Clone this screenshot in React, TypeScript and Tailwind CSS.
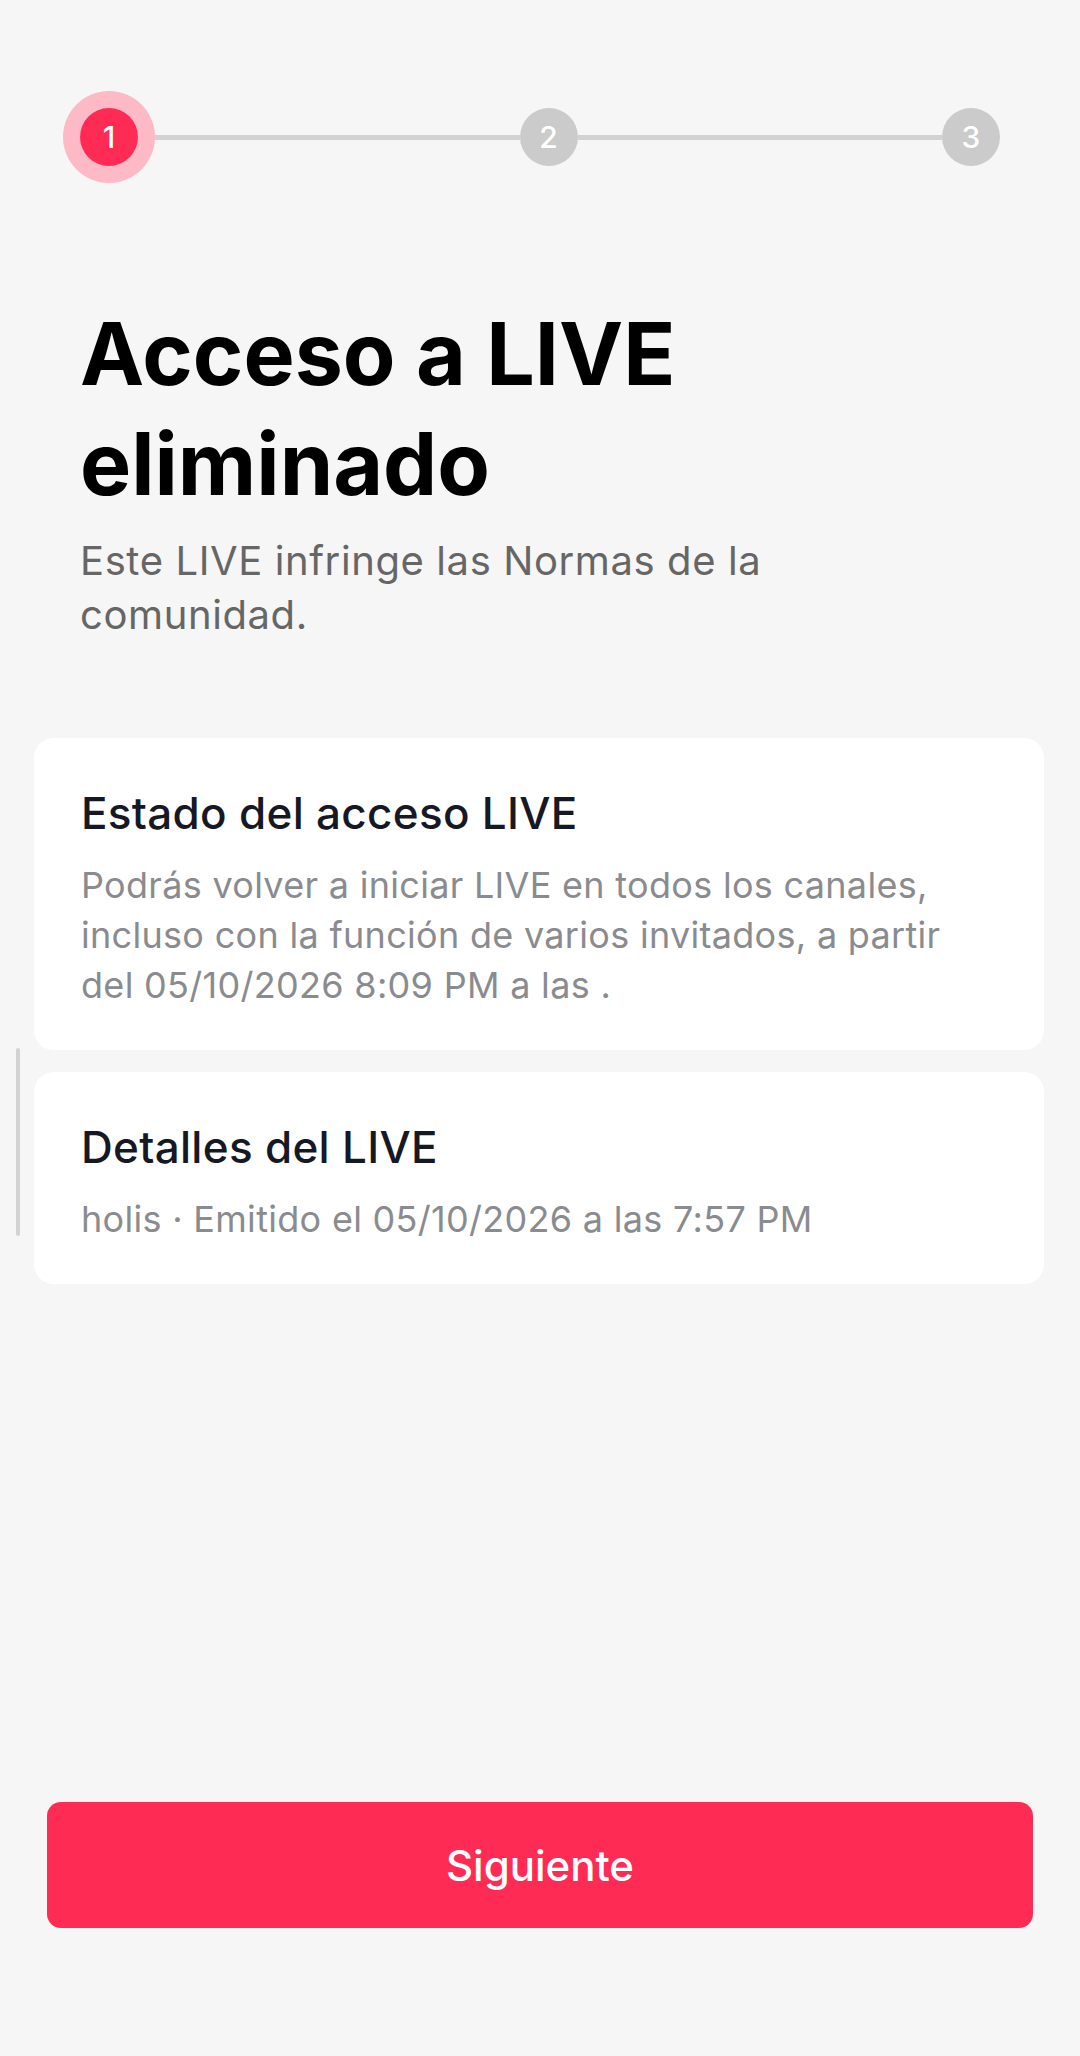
const FONT = "font-['Inter','Liberation_Sans',sans-serif]";

function Stepper() {
  return (
    <div className="flex items-center pl-[63px] pr-[80px] pt-[91px]">
      <div className="flex h-[92px] w-[92px] shrink-0 items-center justify-center rounded-full bg-[#fdb9c6]">
        <div className="flex h-[58px] w-[58px] items-center justify-center rounded-full bg-[#fe2c55] text-[30px] font-medium text-white">
          1
        </div>
      </div>
      <div className="h-[5px] flex-1 bg-[#d2d2d2]" />
      <div className="flex h-[58px] w-[58px] shrink-0 items-center justify-center rounded-full bg-[#cbcbcb] text-[30px] font-medium text-white">
        2
      </div>
      <div className="h-[5px] flex-1 bg-[#d2d2d2]" />
      <div className="flex h-[58px] w-[58px] shrink-0 items-center justify-center rounded-full bg-[#cbcbcb] text-[30px] font-medium text-white">
        3
      </div>
    </div>
  );
}

function InfoCard({ title, body }: { title: string; body: string }) {
  return (
    <div className="rounded-[20px] bg-white pb-[40px] pl-[47px] pr-[70px] pt-[49px]">
      <h2 className="text-[44px] font-medium leading-[52px] tracking-[0.3px] text-[#161823]">{title}</h2>
      <p className="mt-[21px] text-[36px] leading-[50px] tracking-[0.3px] text-[#8a8b8f]">{body}</p>
    </div>
  );
}

export default function App() {
  return (
    <div className={`relative flex h-[2056px] w-[1080px] flex-col bg-[#f6f6f6] ${FONT}`}>
      <Stepper />

      <div className="px-[80px]">
        <h1 className="mt-[116px] text-[86px] font-bold leading-[110px] text-black">
          Acceso a LIVE eliminado
        </h1>
        <p className="mt-[15px] max-w-[760px] text-[40px] leading-[54px] tracking-[0.6px] text-[#666666]">
          Este LIVE infringe las Normas de la comunidad.
        </p>
      </div>

      <div className="mt-[96px] flex flex-col gap-[22px] pl-[34px] pr-[36px]">
        <InfoCard
          title="Estado del acceso LIVE"
          body="Podrás volver a iniciar LIVE en todos los canales, incluso con la función de varios invitados, a partir del 05/10/2026 8:09 PM a las ."
        />
        <InfoCard title="Detalles del LIVE" body="holis · Emitido el 05/10/2026 a las 7:57 PM" />
      </div>

      <div className="flex-1" />

      <div className="mb-[128px] pl-[47px] pr-[47px]">
        <button
          type="button"
          className="flex h-[126px] w-full items-center justify-center rounded-[14px] bg-[#fe2c55] text-[42px] font-medium text-white"
        >
          Siguiente
        </button>
      </div>

      <div className="absolute left-[16px] top-[1048px] h-[188px] w-[4px] rounded-full bg-[#d3d3d3]" />
    </div>
  );
}
